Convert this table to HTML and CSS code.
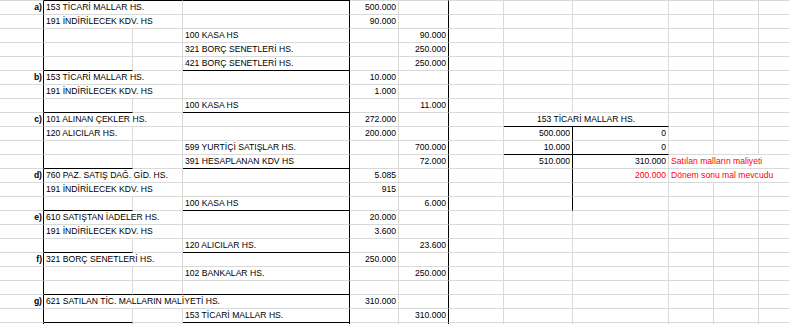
FILE: index.html
```html
<!DOCTYPE html>
<html lang="tr">
<head>
<meta charset="utf-8">
<title>Yevmiye</title>
<link rel="stylesheet" href="styles.css">
</head>
<body>
<div class="sheet">
  <div class="row"><div class="c a"></div><div class="c bb"></div><div class="c bb"></div><div class="c d bb"></div><div class="c"></div><div class="c f"></div><div class="c"></div><div class="c"></div><div class="c"></div><div class="c"></div><div class="c"></div><div class="c"></div></div>

  <div class="row"><div class="c a">a)</div><div class="c s2">153 TİCARİ MALLAR HS.</div><div class="c d"></div><div class="c n">500.000</div><div class="c f"></div><div class="c"></div><div class="c"></div><div class="c"></div><div class="c"></div><div class="c"></div><div class="c"></div></div>
  <div class="row"><div class="c a"></div><div class="c s2">191 İNDİRİLECEK KDV. HS</div><div class="c d"></div><div class="c n">90.000</div><div class="c f"></div><div class="c"></div><div class="c"></div><div class="c"></div><div class="c"></div><div class="c"></div><div class="c"></div></div>
  <div class="row"><div class="c a"></div><div class="c"></div><div class="c"></div><div class="c d">100 KASA HS</div><div class="c"></div><div class="c f n">90.000</div><div class="c"></div><div class="c"></div><div class="c"></div><div class="c"></div><div class="c"></div><div class="c"></div></div>
  <div class="row"><div class="c a"></div><div class="c"></div><div class="c"></div><div class="c d">321 BORÇ SENETLERİ HS.</div><div class="c"></div><div class="c f n">250.000</div><div class="c"></div><div class="c"></div><div class="c"></div><div class="c"></div><div class="c"></div><div class="c"></div></div>
  <div class="row"><div class="c a"></div><div class="c bb"></div><div class="c"></div><div class="c d bb">421 BORÇ SENETLERİ HS.</div><div class="c"></div><div class="c f n">250.000</div><div class="c"></div><div class="c"></div><div class="c"></div><div class="c"></div><div class="c"></div><div class="c"></div></div>

  <div class="row"><div class="c a">b)</div><div class="c s2">153 TİCARİ MALLAR HS.</div><div class="c d"></div><div class="c n">10.000</div><div class="c f"></div><div class="c"></div><div class="c"></div><div class="c"></div><div class="c"></div><div class="c"></div><div class="c"></div></div>
  <div class="row"><div class="c a"></div><div class="c s2">191 İNDİRİLECEK KDV. HS</div><div class="c d"></div><div class="c n">1.000</div><div class="c f"></div><div class="c"></div><div class="c"></div><div class="c"></div><div class="c"></div><div class="c"></div><div class="c"></div></div>
  <div class="row"><div class="c a"></div><div class="c bb"></div><div class="c"></div><div class="c d bb">100 KASA HS</div><div class="c"></div><div class="c f n">11.000</div><div class="c"></div><div class="c"></div><div class="c"></div><div class="c"></div><div class="c"></div><div class="c"></div></div>

  <div class="row"><div class="c a">c)</div><div class="c s2">101 ALINAN ÇEKLER HS.</div><div class="c d"></div><div class="c n">272.000</div><div class="c f"></div><div class="c"></div><div class="c s2 ctr bb">153 TİCARİ MALLAR HS.</div><div class="c"></div><div class="c"></div><div class="c"></div></div>
  <div class="row"><div class="c a"></div><div class="c">120 ALICILAR HS.</div><div class="c"></div><div class="c d"></div><div class="c n">200.000</div><div class="c f"></div><div class="c"></div><div class="c hr n">500.000</div><div class="c n">0</div><div class="c"></div><div class="c"></div><div class="c"></div></div>
  <div class="row"><div class="c a"></div><div class="c"></div><div class="c"></div><div class="c d">599 YURTİÇİ SATIŞLAR HS.</div><div class="c"></div><div class="c f n">700.000</div><div class="c"></div><div class="c hr n bb">10.000</div><div class="c n bb">0</div><div class="c"></div><div class="c"></div><div class="c"></div></div>
  <div class="row"><div class="c a"></div><div class="c bb"></div><div class="c"></div><div class="c d bb">391 HESAPLANAN KDV HS</div><div class="c"></div><div class="c f n">72.000</div><div class="c"></div><div class="c hr n">510.000</div><div class="c n">310.000</div><div class="c s3 red">Satılan malların maliyeti</div></div>

  <div class="row"><div class="c a">d)</div><div class="c s2">760 PAZ. SATIŞ DAĞ. GİD. HS.</div><div class="c d"></div><div class="c n">5.085</div><div class="c f"></div><div class="c"></div><div class="c hr"></div><div class="c n red">200.000</div><div class="c s3 red">Dönem sonu mal mevcudu</div></div>
  <div class="row"><div class="c a"></div><div class="c s2">191 İNDİRİLECEK KDV. HS</div><div class="c d"></div><div class="c n">915</div><div class="c f"></div><div class="c"></div><div class="c hr"></div><div class="c"></div><div class="c"></div><div class="c"></div><div class="c"></div></div>
  <div class="row"><div class="c a"></div><div class="c bb"></div><div class="c"></div><div class="c d bb">100 KASA HS</div><div class="c"></div><div class="c f n">6.000</div><div class="c"></div><div class="c hr"></div><div class="c"></div><div class="c"></div><div class="c"></div><div class="c"></div></div>

  <div class="row"><div class="c a">e)</div><div class="c s2">610 SATIŞTAN İADELER HS.</div><div class="c d"></div><div class="c n">20.000</div><div class="c f"></div><div class="c"></div><div class="c"></div><div class="c"></div><div class="c"></div><div class="c"></div><div class="c"></div></div>
  <div class="row"><div class="c a"></div><div class="c s2">191 İNDİRİLECEK KDV. HS</div><div class="c d"></div><div class="c n">3.600</div><div class="c f"></div><div class="c"></div><div class="c"></div><div class="c"></div><div class="c"></div><div class="c"></div><div class="c"></div></div>
  <div class="row"><div class="c a"></div><div class="c bb"></div><div class="c"></div><div class="c d bb">120 ALICILAR HS.</div><div class="c"></div><div class="c f n">23.600</div><div class="c"></div><div class="c"></div><div class="c"></div><div class="c"></div><div class="c"></div><div class="c"></div></div>

  <div class="row"><div class="c a">f)</div><div class="c s2">321 BORÇ SENETLERİ HS.</div><div class="c d"></div><div class="c n">250.000</div><div class="c f"></div><div class="c"></div><div class="c"></div><div class="c"></div><div class="c"></div><div class="c"></div><div class="c"></div></div>
  <div class="row"><div class="c a"></div><div class="c"></div><div class="c"></div><div class="c d">102 BANKALAR HS.</div><div class="c"></div><div class="c f n">250.000</div><div class="c"></div><div class="c"></div><div class="c"></div><div class="c"></div><div class="c"></div><div class="c"></div></div>
  <div class="row"><div class="c a"></div><div class="c bb"></div><div class="c bb"></div><div class="c d bb"></div><div class="c"></div><div class="c f"></div><div class="c"></div><div class="c"></div><div class="c"></div><div class="c"></div><div class="c"></div><div class="c"></div></div>

  <div class="row"><div class="c a">g)</div><div class="c s3 d">621 SATILAN TİC. MALLARIN MALİYETİ HS.</div><div class="c n">310.000</div><div class="c f"></div><div class="c"></div><div class="c"></div><div class="c"></div><div class="c"></div><div class="c"></div><div class="c"></div></div>
  <div class="row"><div class="c a"></div><div class="c bb"></div><div class="c"></div><div class="c d bb">153 TİCARİ MALLAR HS.</div><div class="c"></div><div class="c f n">310.000</div><div class="c"></div><div class="c"></div><div class="c"></div><div class="c"></div><div class="c"></div><div class="c"></div></div>
  <div class="row"><div class="c a"></div><div class="c"></div><div class="c"></div><div class="c d"></div><div class="c"></div><div class="c f"></div><div class="c"></div><div class="c"></div><div class="c"></div><div class="c"></div><div class="c"></div><div class="c"></div></div>
</div>
</body>
</html>
```

FILE: styles.css
```css
html, body {
  margin: 0;
  padding: 0;
  background: #ffffff;
  overflow: hidden;
}

.sheet {
  display: grid;
  grid-template-columns: 44px 89px 50px 167px 49px 50px 55px 69px 96px 45px 45px 45px;
  grid-auto-rows: 14px;
  margin-top: -13px;
  width: 804px;
  font-family: "Liberation Sans", Arial, sans-serif;
  font-size: 8.6px;
  color: #000000;
}

.row {
  display: contents;
}

.c {
  box-sizing: border-box;
  border-right: 1px solid #d9d9d9;
  border-bottom: 1px solid #d9d9d9;
  padding: 0 2px;
  line-height: 13px;
  white-space: nowrap;
  overflow: hidden;
}

.a {
  border-right-color: #000000;
  text-align: right;
  font-weight: bold;
  padding-right: 1px;
}

.d,
.f,
.hr {
  border-right-color: #000000;
}

.bb {
  border-bottom-color: #000000;
}

.n {
  text-align: right;
}

.ctr {
  text-align: center;
}

.s2 {
  grid-column: span 2;
}

.s3 {
  grid-column: span 3;
}

.red {
  color: #ff0000;
}
```
